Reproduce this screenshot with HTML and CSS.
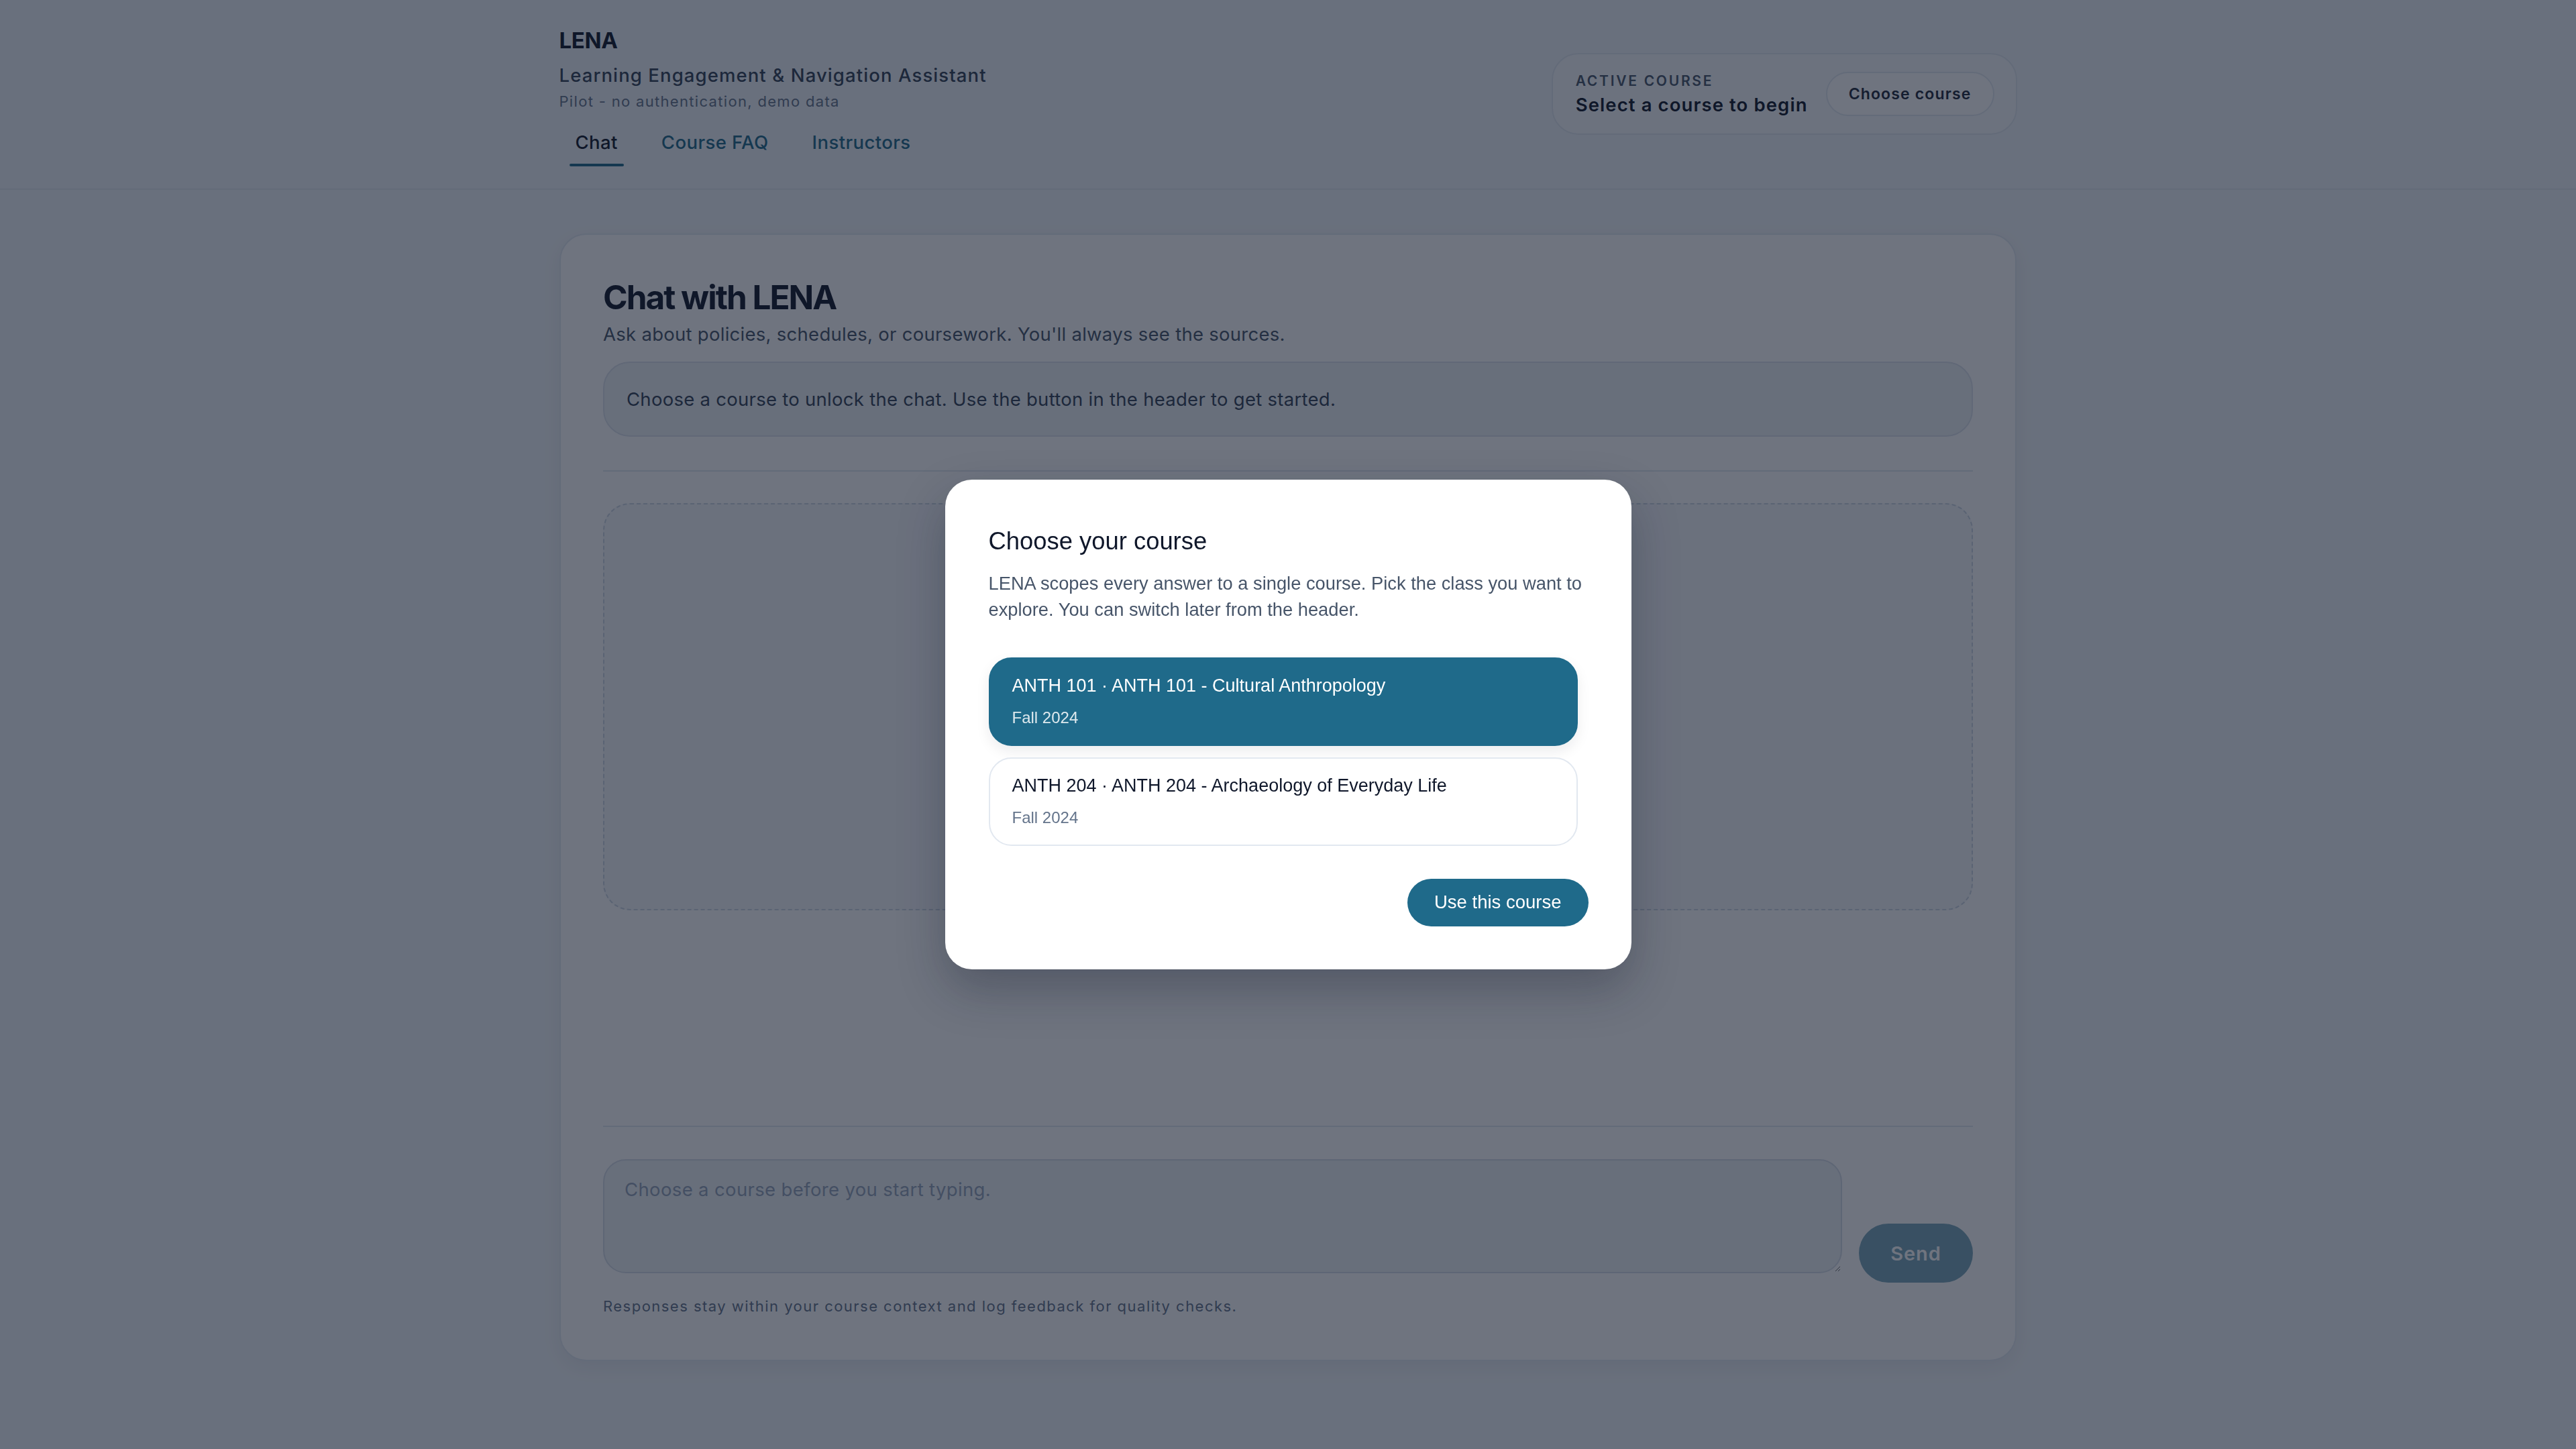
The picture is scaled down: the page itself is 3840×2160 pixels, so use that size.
FILE: index.html
```html
<!DOCTYPE html>
<html lang="en">
<head>
<meta charset="utf-8">
<title>LENA</title>
<link rel="stylesheet" href="styles.css">
</head>
<body>
<div class="app">
  <header class="site-header">
    <div class="header-inner">
      <div class="brand">
        <div class="brand-name">LENA</div>
        <div class="brand-full">Learning Engagement &amp; Navigation Assistant</div>
        <div class="brand-note">Pilot - no authentication, demo data</div>
        <nav class="tabs">
          <a class="tab active">Chat</a>
          <a class="tab">Course FAQ</a>
          <a class="tab">Instructors</a>
        </nav>
      </div>
      <div class="course-pill">
        <div class="course-text">
          <div class="course-label">Active course</div>
          <div class="course-name">Select a course to begin</div>
        </div>
        <button class="btn-outline" type="button">Choose course</button>
      </div>
    </div>
  </header>

  <main class="main">
    <section class="card">
      <h1 class="card-title">Chat with LENA</h1>
      <p class="lead">Ask about policies, schedules, or coursework. You'll always see the sources.</p>
      <div class="notice">Choose a course to unlock the chat. Use the button in the header to get started.</div>
      <div class="chat-log">
        <div class="empty-box"></div>
      </div>
      <form class="composer">
        <div class="input-row">
          <textarea class="message-input" disabled placeholder="Choose a course before you start typing."></textarea>
          <button class="send" type="button" disabled>Send</button>
        </div>
        <p class="fineprint">Responses stay within your course context and log feedback for quality checks.</p>
      </form>
    </section>
  </main>
</div>

<div class="overlay">
  <div class="modal">
    <h2 class="modal-title">Choose your course</h2>
    <p class="modal-desc">LENA scopes every answer to a single course. Pick the class you want to explore. You can switch later from the header.</p>
    <div class="option-list">
      <button class="option selected" type="button">
        <span class="option-title">ANTH 101 · ANTH 101 - Cultural Anthropology</span>
        <span class="option-term">Fall 2024</span>
      </button>
      <button class="option" type="button">
        <span class="option-title">ANTH 204 · ANTH 204 - Archaeology of Everyday Life</span>
        <span class="option-term">Fall 2024</span>
      </button>
    </div>
    <div class="modal-actions">
      <button class="btn-primary" type="button">Use this course</button>
    </div>
  </div>
</div>
</body>
</html>
```

FILE: styles.css
```css
* { box-sizing: border-box; }

html, body {
  margin: 0;
  padding: 0;
}

body {
  min-height: 2160px;
  background: #f1f5f9;
  font-family: Inter, "Noto Sans", sans-serif;
  color: #0f172a;
}

.site-header {
  border-bottom: 2px solid #e2e8f0;
}

.header-inner {
  width: 2173px;
  margin: 0 auto;
  padding: 40px 0 33px;
  display: flex;
  justify-content: space-between;
  align-items: center;
}

.brand {
  display: flex;
  flex-direction: column;
}

.brand-name {
  font-size: 33px;
  font-weight: 700;
  color: #0f172a;
  letter-spacing: -0.01em;
}

.brand-full {
  margin-top: 15px;
  font-size: 27.5px;
  font-weight: 500;
  color: #334155;
  letter-spacing: 0.04em;
}

.brand-note {
  margin-top: 9px;
  font-size: 22px;
  color: #64748b;
  letter-spacing: 0.06em;
}

.tabs {
  margin-top: 31px;
  display: flex;
  gap: 17px;
}

.tab {
  display: flex;
  flex-direction: column;
  padding: 0 24px;
  font-size: 27.5px;
  font-weight: 500;
  letter-spacing: 0.015em;
  color: #1f6a8a;
  text-decoration: none;
}

.tab::after {
  content: "";
  display: block;
  height: 4px;
  margin: 15px -9px 0;
  border-radius: 2px;
  background: transparent;
}

.tab.active {
  color: #0f172a;
}

.tab.active::after {
  background: #1f6a8a;
}

.course-pill {
  display: flex;
  align-items: center;
  gap: 27px;
  height: 122px;
  padding: 0 32px 0 34px;
  border: 2px solid #e2e8f0;
  border-radius: 40px;
  background: #f8fafc;
  margin-top: -8px;
}

.course-text {
  display: flex;
  flex-direction: column;
}

.course-label {
  font-size: 21px;
  font-weight: 600;
  text-transform: uppercase;
  letter-spacing: 0.13em;
  color: #475569;
}

.course-name {
  margin-top: 6px;
  font-size: 27.5px;
  font-weight: 600;
  color: #0f172a;
  letter-spacing: 0.04em;
}

.btn-outline {
  height: 66px;
  padding: 0 32px;
  border: 2px solid #e2e8f0;
  border-radius: 999px;
  background: #ffffff;
  font-family: Inter, "Noto Sans", sans-serif;
  font-size: 23px;
  font-weight: 600;
  letter-spacing: 0.05em;
  color: #1e293b;
}

.main {
  padding: 65px 0 80px;
}

.card {
  width: 2172px;
  margin: 0 auto;
  padding: 64px 63px 67px;
  background: #ffffff;
  border: 2px solid #e2e8f0;
  border-radius: 40px;
  box-shadow: 0 10px 30px rgba(15, 23, 42, 0.06);
}

.card-title {
  margin: 0;
  font-size: 49.5px;
  font-weight: 700;
  line-height: 1.21;
  letter-spacing: -0.04em;
  color: #0f172a;
}

.lead {
  margin: 7px 0 0;
  font-size: 27.5px;
  letter-spacing: 0.01em;
  color: #475569;
}

.notice {
  margin-top: 24px;
  padding: 35px 33px;
  border: 2px solid #dbe2ea;
  border-radius: 40px;
  background: #eef2f6;
  font-size: 27.5px;
  line-height: 1.4;
  letter-spacing: 0.01em;
  color: #334155;
}

.chat-log {
  margin-top: 50px;
  height: 979px;
  padding-top: 47px;
  border-top: 2px solid #e2e8f0;
  border-bottom: 2px solid #e2e8f0;
}

.empty-box {
  height: 607px;
  border: 2px dashed #cbd5e1;
  border-radius: 40px;
  background: #f6f8fb;
}

.composer {
  padding-top: 48px;
}

.input-row {
  display: flex;
  align-items: flex-end;
  gap: 25px;
}

.message-input {
  flex: 1;
  height: 170px;
  margin-bottom: 14px;
  padding: 26px 30px;
  border: 2px solid #d5dce6;
  border-radius: 34px;
  background: #eef2f6;
  font-family: Inter, "Noto Sans", sans-serif;
  font-size: 27.5px;
  letter-spacing: 0.013em;
  color: #0f172a;
}

.message-input::placeholder {
  color: #94a3b8;
}

.send {
  width: 170px;
  height: 88px;
  border: none;
  border-radius: 999px;
  background: #1f6a8a;
  opacity: 0.6;
  color: #ffffff;
  font-family: Inter, "Noto Sans", sans-serif;
  font-size: 29px;
  font-weight: 600;
  letter-spacing: 0.03em;
}

.fineprint {
  margin: 22px 0 0;
  font-size: 22px;
  color: #64748b;
  letter-spacing: 0.067em;
}

/* Modal */
.overlay {
  position: fixed;
  inset: 0;
  background: rgba(15, 23, 42, 0.6);
  display: flex;
  align-items: center;
  justify-content: center;
}

.modal {
  width: 1023px;
  padding: 70px 64px 64px 65px;
  background: #ffffff;
  border-radius: 40px;
  box-shadow: 0 30px 70px rgba(15, 23, 42, 0.3);
  font-family: "Liberation Sans", Arial, sans-serif;
}

.modal-title {
  margin: 0;
  font-size: 36.4px;
  font-weight: 400;
  line-height: 1.2;
  color: #0f172a;
}

.modal-desc {
  margin: 21px 0 0;
  font-size: 27.3px;
  line-height: 39px;
  color: #475569;
}

.option-list {
  margin-top: 52px;
  padding-right: 16px;
  display: flex;
  flex-direction: column;
  gap: 17px;
}

.option {
  display: flex;
  flex-direction: column;
  align-items: flex-start;
  width: 100%;
  padding: 25px 33px 26px;
  border: 2px solid #e2e8f0;
  border-radius: 34px;
  background: #ffffff;
  font-family: "Liberation Sans", Arial, sans-serif;
  text-align: left;
  color: #0f172a;
}

.option-title {
  font-size: 27px;
}

.option-term {
  margin-top: 18px;
  font-size: 24px;
  color: #64748b;
}

.option.selected {
  background: #1f6a8a;
  border-color: #1f6a8a;
  color: #ffffff;
  box-shadow: 0 8px 20px rgba(15, 23, 42, 0.08);
}

.option.selected .option-term {
  color: rgba(255, 255, 255, 0.85);
}

.modal-actions {
  margin-top: 49px;
  display: flex;
  justify-content: flex-end;
}

.btn-primary {
  height: 71px;
  padding: 0 40px;
  border: none;
  border-radius: 999px;
  background: #1f6a8a;
  color: #ffffff;
  font-family: "Liberation Sans", Arial, sans-serif;
  font-size: 27.5px;
}
```
